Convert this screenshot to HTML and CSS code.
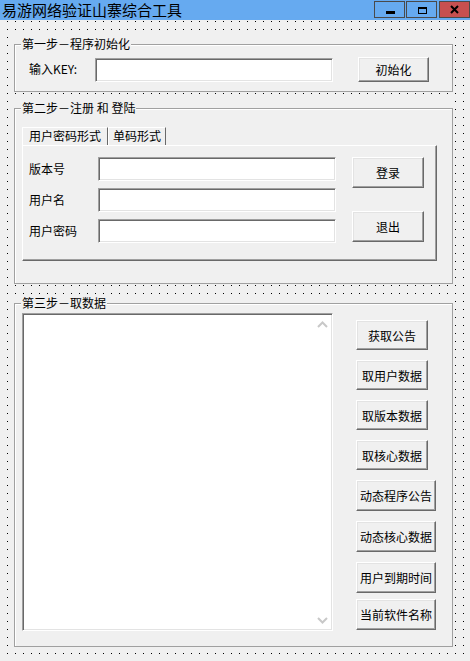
FILE: index.html
```html
<!DOCTYPE html>
<html lang="zh-CN">
<head>
  <meta charset="UTF-8" />
  <meta name="viewport" content="width=device-width, initial-scale=1.0" />
  <title>易游网络验证山寨综合工具</title>
  <link rel="stylesheet" href="styles.css">
</head>
<body>
  <div class="window">
    <div class="titlebar">
      <span class="title">易游网络验证山寨综合工具</span>
      <div class="caption">
        <span class="cap-btn">
          <svg width="29" height="15" viewBox="0 0 29 15"><rect x="11" y="9" width="9" height="3" fill="#000"/></svg>
        </span>
        <span class="cap-btn max">
          <svg width="29" height="15" viewBox="0 0 29 15"><rect x="11.5" y="5.5" width="8" height="6" fill="none" stroke="#000"/><rect x="11" y="5" width="9" height="2" fill="#000"/></svg>
        </span>
        <span class="cap-btn close">
          <svg width="29" height="15" viewBox="0 0 29 15"><path d="M11 4 L18 11 M18 4 L11 11" stroke="#000" stroke-width="2"/></svg>
        </span>
      </div>
    </div>

    <div class="client">
      <!-- step 1 -->
      <div class="group g1">
        <div class="frame">
          <span class="group-title">第一步－程序初始化</span>
          <div class="init-row">
            <span class="label key-label">输入KEY:</span>
            <input class="edit key-edit" type="text">
            <button class="btn init-btn">初始化</button>
          </div>
        </div>
      </div>

      <!-- step 2 -->
      <div class="group g2">
        <div class="frame">
          <span class="group-title">第二步－注册 和 登陆</span>
          <div class="tabs">
            <span class="tab active">用户密码形式</span>
            <span class="tab">单码形式</span>
          </div>
          <div class="tab-page">
            <div class="fields">
              <div class="field"><span class="label">版本号</span><input class="edit" type="text"></div>
              <div class="field"><span class="label">用户名</span><input class="edit" type="text"></div>
              <div class="field"><span class="label">用户密码</span><input class="edit" type="password"></div>
            </div>
            <div class="login-btns">
              <button class="btn login-btn">登录</button>
              <button class="btn login-btn exit">退出</button>
            </div>
          </div>
        </div>
      </div>

      <!-- step 3 -->
      <div class="group g3">
        <div class="frame">
          <span class="group-title">第三步－取数据</span>
          <div class="data-row">
            <div class="memo">
              <div class="memo-text"></div>
              <div class="vscroll">
                <svg width="11" height="7" viewBox="0 0 11 7"><path d="M1 6 L5.5 1.5 L10 6" fill="none" stroke="#c8c8c8" stroke-width="2"/></svg>
                <svg width="11" height="7" viewBox="0 0 11 7"><path d="M1 1 L5.5 5.5 L10 1" fill="none" stroke="#c8c8c8" stroke-width="2"/></svg>
              </div>
            </div>
            <div class="data-btns">
              <button class="btn data-btn">获取公告</button>
              <button class="btn data-btn">取用户数据</button>
              <button class="btn data-btn">取版本数据</button>
              <button class="btn data-btn">取核心数据</button>
              <button class="btn data-btn wide">动态程序公告</button>
              <button class="btn data-btn wide">动态核心数据</button>
              <button class="btn data-btn wide">用户到期时间</button>
              <button class="btn data-btn wide last">当前软件名称</button>
            </div>
          </div>
        </div>
      </div>
    </div>
  </div>
</body>
</html>
```

FILE: styles.css
```css
* {
  box-sizing: border-box;
}

body {
  margin: 0;
  font-family: 'Noto Sans CJK SC', 'DejaVu Sans', sans-serif;
  font-size: 12px;
  color: #000;
  background: #f0f0f0;
}

.window {
  width: 470px;
  height: 661px;
  overflow: hidden;
}

/* title bar */
.titlebar {
  height: 20px;
  background: #66aaf0;
  display: flex;
  align-items: flex-start;
}

.title {
  font-size: 15px;
  line-height: 19px;
  margin-left: 2px;
  white-space: nowrap;
}

.caption {
  margin-left: auto;
  display: flex;
  padding-top: 1px;
}

.cap-btn {
  width: 31px;
  height: 17px;
  border: 1px solid #4a4a4a;
  display: flex;
}

.cap-btn.max {
  margin-left: 1px;
}

.cap-btn.close {
  margin-left: 2px;
  background: #c75050;
}

/* client area with designer grid */
.client {
  height: 641px;
  padding-top: 17px;
  background-color: #f0f0f0;
  background-image:
    linear-gradient(to right, transparent 1px, #f0f0f0 1px),
    linear-gradient(#000 1px, #f0f0f0 1px);
  background-size: 8px 8px;
  background-position: 7px 1px;
}

.group {
  margin-left: 14px;
  width: 439px;
  padding-top: 7px;
  background: #f0f0f0;
}

.frame {
  border: 1px solid #a0a0a0;
  box-shadow: inset 1px 1px #fff;
}

.group-title {
  display: block;
  width: max-content;
  margin: -8px 0 0 6px;
  padding: 0 1px;
  line-height: 14px;
  background: #f0f0f0;
}

.g1 .frame {
  height: 48px;
}

.g2 {
  margin-top: 9px;
}

.g2 .frame {
  height: 176px;
}

.g3 {
  margin-top: 12px;
}

.g3 .frame {
  height: 344px;
}

/* controls */
.label {
  line-height: 14px;
}

.edit {
  width: 238px;
  height: 24px;
  margin: 0;
  padding: 0 4px;
  background: #fff;
  border: 1px solid;
  border-color: #a0a0a0 #fff #fff #a0a0a0;
  box-shadow: inset 1px 1px #696969, inset -1px -1px #e3e3e3;
  font: inherit;
  outline: none;
}

.btn {
  margin: 0;
  padding: 0;
  background: #f0f0f0;
  border: 1px solid;
  border-color: #fff #696969 #696969 #fff;
  box-shadow: inset -1px -1px #a0a0a0, inset 1px 1px #e3e3e3;
  font: inherit;
  color: #000;
  cursor: pointer;
}

/* step 1 */
.init-row {
  display: flex;
  align-items: flex-start;
  margin-top: 6px;
  padding-left: 14px;
}

.key-label {
  width: 66px;
  margin-top: 5px;
}

.key-edit {
  margin-top: 1px;
}

.init-btn {
  width: 71px;
  height: 25px;
  margin-left: 25px;
}

/* step 2 */
.tabs {
  display: flex;
  margin: 12px 0 0 7px;
  height: 18px;
}

.tab {
  height: 18px;
  line-height: 16px;
  padding: 0 6px;
  border: 1px solid;
  border-color: #fff #696969 transparent #fff;
  border-bottom: none;
}

.tab.active {
  width: 86px;
}

.tab + .tab {
  width: 58px;
  padding: 0 4px;
}

.tab-page {
  margin-left: 7px;
  width: 415px;
  height: 116px;
  display: flex;
  padding: 11px 0 0 6px;
  border: 1px solid;
  border-color: #fff #696969 #696969 #fff;
  box-shadow: inset -1px -1px #a0a0a0;
}

.fields {
  display: flex;
  flex-direction: column;
  gap: 7px;
}

.field {
  display: flex;
  align-items: center;
}

.field .label {
  width: 69px;
}

.login-btns {
  display: flex;
  flex-direction: column;
  gap: 23px;
  margin-left: 16px;
}

.login-btn {
  width: 72px;
  height: 31px;
}

/* step 3 */
.data-row {
  display: flex;
  align-items: flex-start;
  margin-top: 3px;
  padding-left: 7px;
}

.memo {
  width: 311px;
  height: 318px;
  display: flex;
  background: #fff;
  border: 1px solid;
  border-color: #a0a0a0 #fff #fff #a0a0a0;
  box-shadow: inset 1px 1px #696969, inset -1px -1px #e3e3e3;
}

.memo-text {
  flex: 1;
}

.vscroll {
  width: 17px;
  display: flex;
  flex-direction: column;
  justify-content: space-between;
  align-items: center;
  padding: 7px 2px 6px 0;
}

.data-btns {
  display: flex;
  flex-direction: column;
  gap: 10px;
  margin: 7px 0 0 23px;
}

.data-btn {
  width: 72px;
  height: 30px;
}

.data-btn.wide {
  width: 80px;
  height: 31px;
}

.data-btn.last {
  margin-top: -4px;
}
```
